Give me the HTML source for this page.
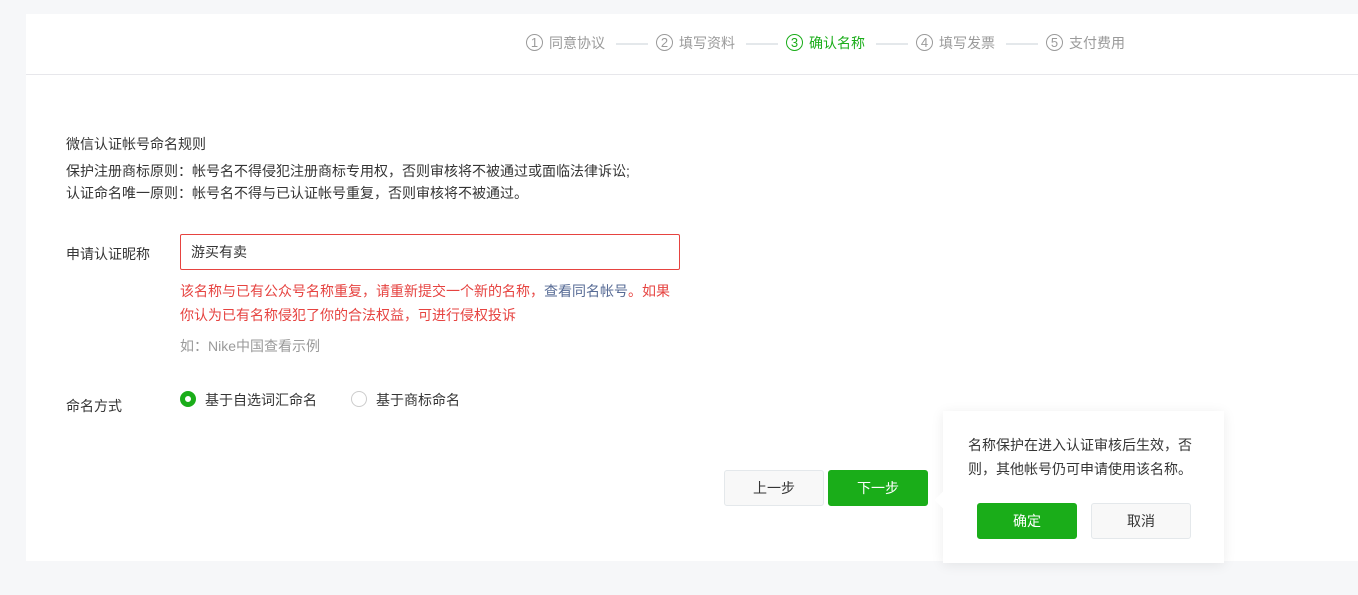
<!DOCTYPE html>
<html><head><meta charset="utf-8"><style>
*{margin:0;padding:0;box-sizing:border-box}
body{width:1358px;height:595px;background:#f6f7f9;font-family:"Liberation Sans","Noto Sans CJK SC",sans-serif;font-size:14px;color:#353535;position:relative;overflow:hidden}
.card{position:absolute;left:26px;top:14px;width:1340px;height:547px;background:#fff}
.hd{position:absolute;left:0;top:0;right:0;height:61px;border-bottom:1px solid #e7e7eb}
.step{position:absolute;top:20px;height:18px;line-height:18px;color:#9a9a9a;font-size:14px;white-space:nowrap}
.step .c{display:inline-block;width:17px;height:17px;border:1px solid #9a9a9a;border-radius:50%;text-align:center;line-height:15px;font-size:13px;margin-right:6px;vertical-align:top}
.step.on{color:#1aad19}.step.on .c{border-color:#1aad19}
.ln{position:absolute;top:29px;width:32px;height:2px;background:#e4e8eb}
.t{position:absolute;white-space:nowrap}
.btn{position:absolute;height:36px;width:100px;border-radius:3px;text-align:center;line-height:34px;font-size:14px;border:1px solid #e4e8eb;background:#f8f8f8;color:#353535}
.btn.g{background:#1aad19;border-color:#1aad19;color:#fff}
.pop{position:absolute;left:943px;top:411px;width:281px;height:152px;background:#fff;box-shadow:0 2px 12px rgba(0,0,0,.08)}
.arrow{position:absolute;left:-6px;top:83px;width:12px;height:12px;background:#fff;transform:rotate(45deg)}
</style></head><body>
<div class="card">
 <div class="hd">
  <div class="step" style="left:500px"><span class="c">1</span>同意协议</div>
  <div class="ln" style="left:590px"></div>
  <div class="step" style="left:630px"><span class="c">2</span>填写资料</div>
  <div class="ln" style="left:720px"></div>
  <div class="step on" style="left:760px"><span class="c">3</span>确认名称</div>
  <div class="ln" style="left:850px"></div>
  <div class="step" style="left:890px"><span class="c">4</span>填写发票</div>
  <div class="ln" style="left:980px"></div>
  <div class="step" style="left:1020px"><span class="c">5</span>支付费用</div>
 </div>
 <div class="t" style="left:40px;top:120px;font-size:14px">微信认证帐号命名规则</div>
 <div class="t" style="left:40px;top:146px;font-size:14px;line-height:22px">保护注册商标原则：帐号名不得侵犯注册商标专用权，否则审核将不被通过或面临法律诉讼;<br>认证命名唯一原则：帐号名不得与已认证帐号重复，否则审核将不被通过。</div>
 <div class="t" style="left:40px;top:230px">申请认证昵称</div>
 <div style="position:absolute;left:154px;top:220px;width:500px;height:36px;border:1px solid #e64340;border-radius:2px;padding-left:10px;line-height:34px">游买有卖</div>
 <div class="t" style="left:154px;top:265px;font-size:14px;line-height:24px;color:#e64340">该名称与已有公众号名称重复，请重新提交一个新的名称，<span style="color:#576b95">查看同名帐号</span>。如果<br>你认为已有名称侵犯了你的合法权益，可进行侵权投诉</div>
 <div class="t" style="left:154px;top:322px;font-size:14px;color:#9a9a9a">如：Nike中国查看示例</div>
 <div class="t" style="left:40px;top:382px">命名方式</div>
 <div style="position:absolute;left:154px;top:377px;width:16px;height:16px;border-radius:50%;border:5px solid #1aad19;background:#fff"></div>
 <div class="t" style="left:179px;top:376px">基于自选词汇命名</div>
 <div style="position:absolute;left:325px;top:377px;width:16px;height:16px;border-radius:50%;border:1px solid #ccc"></div>
 <div class="t" style="left:350px;top:376px">基于商标命名</div>
</div>
<div class="btn" style="left:724px;top:470px">上一步</div>
<div class="btn g" style="left:828px;top:470px">下一步</div>
<div class="pop"><div class="arrow"></div>
 <div class="t" style="left:25px;top:22px;font-size:14px;line-height:24px;color:#353535">名称保护在进入认证审核后生效，否<br>则，其他帐号仍可申请使用该名称。</div>
</div>
<div class="btn g" style="left:977px;top:503px">确定</div>
<div class="btn" style="left:1091px;top:503px">取消</div>
</body></html>
